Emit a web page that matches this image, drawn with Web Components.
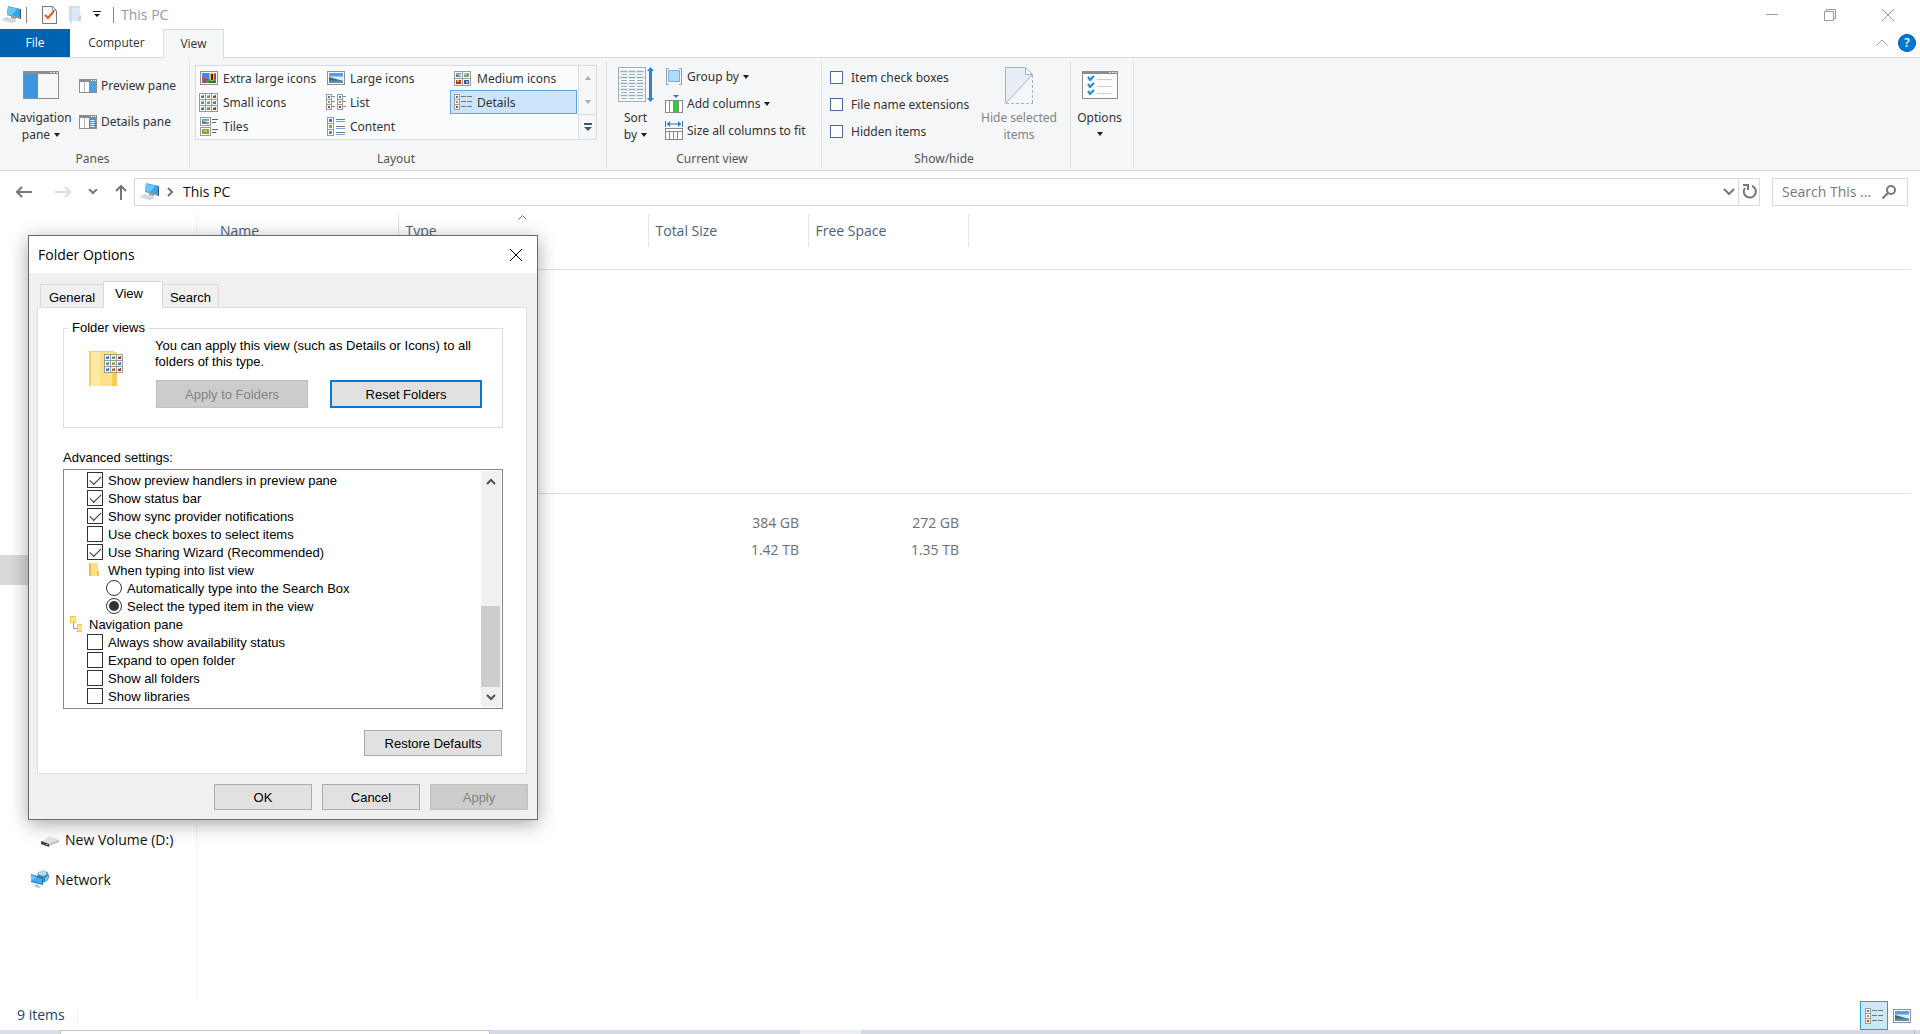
<!DOCTYPE html>
<html lang="en">
<head>
<meta charset="utf-8">
<title>This PC</title>
<style>
html, body {
    margin: 0;
    height: 100%;
    background: #fff;
    font-family: "Open Sans", "Noto Sans", sans-serif;
    overflow: hidden;
}
</style>
</head>
<body>
<explorer-window></explorer-window>

<script>
// thumbnails shared by the view icons
const pic = (x, y, w, h) => `
    <rect x="${x}" y="${y}" width="${w}" height="${h}" fill="#5b9be8"/>
    <path d="M${x} ${y + h * 0.35}H${x + w}V${y + h}H${x}z" fill="#dcebf7"/>
    <path d="M${x} ${y + h * 0.4}L${x + w} ${y + h * 0.8}H${x}z" fill="#3f6f5c"/>
    <rect x="${x}" y="${y + h * 0.75}" width="${w}" height="${h * 0.25}" fill="#5c8fb0"/>`;

const cell = (x, y, s, color) => `
    <rect x="${x + .5}" y="${y + .5}" width="${s - 1}" height="${s - 1}" fill="#fff" stroke="#9a9a9a"/>
    <rect x="${x + 2}" y="${y + 2}" width="${s - 4}" height="${s - 4}" fill="${color}"/>`;

const cells3 = () => {
    const colors = ["#3d7ab8", "#6f9d4a", "#a8372a", "#4f93a0", "#a39a35", "#3d7ab8", "#3d7ab8", "#b06a2c", "#a8372a"];
    return `<rect width="19" height="19" fill="#9a9a9a"/>` + colors.map((c, i) => {
        const x = 1 + (i % 3) * 6, y = 1 + Math.floor(i / 3) * 6;
        return `<rect x="${x}" y="${y}" width="5" height="5" fill="#fff"/>
            <rect x="${x + 1}" y="${y + 1}" width="3" height="3" fill="${c}"/>
            <rect x="${x + 1}" y="${y + 1}" width="2" height="1" fill="#a9cdf0"/>`;
    }).join("");
};

const listCells = (x) => cell(x, 0, 6, "#3d7ab8") + cell(x, 5, 6, "#a39a35") + cell(x, 10, 6, "#b03a20");

const pane = (inner) => `
    <rect x=".5" y=".5" width="17" height="13" fill="#fcfcfc" stroke="#8b8d90"/>
    <rect width="18" height="3" fill="#8b8d90"/>
    <path d="M12 1.500h1M14 1.500h1M16 1.500h1" stroke="#fff"/>
    <path d="M5.500 3v10" stroke="#b5b5b5"/>${inner}`;

// name: [width, height, markup]
const ICONS = {
    pc: [20, 17, `<path d="M7 0l13 3v10h-1L6 9z" fill="#8a9bab"/><path d="M18 3l2 0v10l-1 0z" fill="#44586b"/>
        <path d="M7 1l12 2-1 8-12-3z" fill="#2fa8f3"/><path d="M7 1l9 2-5 6-5-1z" fill="#6dc6fa"/>
        <path d="M10 10l5 1v2l-5-1z" fill="#8c99a5"/>
        <path d="M0 14l5-3 10 3v1l-4 2z" fill="#c0c8d1"/><path d="M0 14l5-3 9 3-4 2z" fill="#e1e6eb"/>
        <path d="M3 13l7 2M5 12l7 2" stroke="#c9d0d8"/>`],
    props: [15, 18, `<path d="M.5.5h10l4 4v13H.5z" fill="#fafafa" stroke="#777"/><path d="M10.500.5v4h4" fill="none" stroke="#999"/>
        <path d="M3 9l3 3 6-7" fill="none" stroke="#e8591c" stroke-width="2"/>`],
    newFolder: [14, 18, `<path d="M1 0h11v9h1v6h-9v3L1 15z" fill="#cfdcef"/><path d="M4 2h8v8h1v5H4z" fill="#dde7f4"/><path d="M11 9l2 1v5h-3z" fill="#c3d2e8"/>`],
    quickArrow: [8, 7, `<path d="M0 .5h8" stroke="#222"/><path d="M1 3h6L4 6z" fill="#111"/>`],
    minimize: [12, 12, `<path d="M0 5.500h12" stroke="#999"/>`],
    restore: [12, 12, `<path d="M.5 2.500h9v9h-9zM2.500 2.500v-2h9v9h-2" fill="none" stroke="#999"/>`],
    close: [12, 12, `<path d="M0 0L12 12M12 0L0 12" stroke="currentColor"/>`],
    collapse: [12, 7, `<path d="M.5 6.500L6 1l5.500 5.500" fill="none" stroke="#999"/>`],
    navPane: [36, 28, `<rect x=".5" y=".5" width="35" height="27" fill="#f8f8f8" stroke="#8b8d90"/><rect width="36" height="3" fill="#8b8d90"/>
        <path d="M27 1.500h2M30 1.500h2M33 1.500h2" stroke="#ddd"/><rect x="1" y="3" width="14" height="24" fill="#3d96df"/>`],
    previewPane: [18, 14, pane(`<rect x="10" y="3" width="7" height="10" fill="#4a9fe6"/>`)],
    detailsPane: [18, 14, pane(`<rect x="10" y="3" width="7" height="10" fill="#3d96df"/><path d="M11.500 5.500h4M11.500 7.500h4M11.500 9.500h4M11.500 11.500h4" stroke="#fff"/>`)],
    xl: [18, 14, `<rect x=".5" y=".5" width="17" height="13" fill="#fff" stroke="#8f8f8f"/><rect x="2" y="2" width="14" height="10" fill="#3f86e8"/>
        <path d="M2 6h3v6H2z" fill="#c64a5a"/><path d="M4 8h4v4H4z" fill="#7a4fa0"/><path d="M6 9h4v3H6z" fill="#4c9a3a"/>
        <path d="M9 2h6v5l-2 3h-2L9 7z" fill="#f0c000"/><path d="M11 3h2v6h-2z" fill="#29261f"/><path d="M9 10h7v2H9z" fill="#3c6e30"/><path d="M14 3h2v5h-2z" fill="#c33525"/>`],
    large: [18, 14, `<rect x=".5" y=".5" width="17" height="13" fill="#fff" stroke="#8f8f8f"/>${pic(2, 2, 14, 10)}`],
    medium: [17, 15, `<rect width="17" height="15" fill="#9a9a9a"/>
        <path d="M1 1h7v6H1zM9 1h7v6H9zM1 8h7v6H1zM9 8h7v6H9z" fill="#fff"/>
        ${pic(2, 2, 5, 4)}<rect x="10" y="2" width="5" height="4" fill="#7cab58"/><path d="M10 2h3v2h-3z" fill="#9cc9ee"/>
        <rect x="2" y="9" width="5" height="4" fill="#b8351f"/><path d="M3 9h2v2H3z" fill="#f0b429"/>
        <rect x="10" y="9" width="5" height="4" fill="#315fb2"/><path d="M12 10h2v2h-2z" fill="#f0c000"/>`],
    small: [19, 19, cells3()],
    list: [20, 16, `${listCells(0)}${listCells(11)}<path d="M6 2.500h3M6 7.500h3M6 12.500h3M17 2.500h3M17 7.500h3M17 12.500h3" stroke="#888"/>`],
    details: [18, 16, `${listCells(0)}<path d="M7 2.500h5M13 2.500h5M7 7.500h5M13 7.500h5M7 12.500h5M13 12.500h5" stroke="#777"/>`],
    tiles: [19, 19, `<rect x="1.500" y=".5" width="10" height="8" fill="#fff" stroke="#999"/>${pic(3, 2, 7, 5)}
        <rect x="1.500" y="10.500" width="10" height="8" fill="#fff" stroke="#999"/><rect x="3" y="12" width="7" height="5" fill="#7ca84f"/>
        <path d="M5 13h3v2H5z" fill="#e3b63b"/><path d="M13 2.500h6M13 5.500h4M13 12.500h6M13 15.500h4" stroke="#666"/>`],
    content: [19, 19, `${cell(1, 0, 7, "#3d7ab8")}${cell(1, 6, 7, "#a39a35")}${cell(1, 12, 7, "#4f93a0")}
        <path d="M10 2.500h9M10 9.500h9M10 15.500h9" stroke="#777"/><path d="M10 4.500h9M10 11.500h9M10 17.500h9" stroke="#6aa7ea"/>`],
    galUp: [6, 4, `<path d="M0 4L3 0l3 4z" fill="#a5adba"/>`],
    galDown: [6, 4, `<path d="M0 0h6L3 4z" fill="#a5adba"/>`],
    galMore: [8, 8, `<path d="M0 1h8" stroke="#42566e" stroke-width="2"/><path d="M0 4h8L4 8z" fill="#42566e"/>`],
    caret: [6, 4, `<path d="M0 0h6L3 4z" fill="#1e1e1e"/>`],
    sort: [36, 36, `<rect x=".5" y=".5" width="27" height="34" fill="#fdfdfd" stroke="#aaa"/>
        ${[3, 9, 15, 21, 27].map((y) => `<rect x="1" y="${y}" width="26" height="3" fill="#d4ebf6"/>`).join("")}
        ${[4, 7, 10, 13, 16, 19, 22, 25, 28, 31].map((y) => `<path d="M3 ${y + .5}h6M11 ${y + .5}h6M19 ${y + .5}h6" stroke="#aaa"/>`).join("")}
        <path d="M32.500 0l3.500 4h-2v27h2l-3.500 4-3.500-4h2V4h-2z" fill="#2a86d1"/>`],
    groupBy: [18, 17, `<path d="M4 .5H1.500v16H4M14 .5h2.500v16H14" fill="none" stroke="#999"/><rect x="3.500" y="2.500" width="11" height="11" fill="#b0dbfa" stroke="#76afe0"/>`],
    addColumns: [18, 18, `<path d="M8 0h6l-3 3z" fill="#2a78ba"/><rect x=".5" y="5.500" width="17" height="12" fill="#fff" stroke="#888"/>
        <path d="M4.500 6v11M8.500 6v11M13.500 6v11" stroke="#888"/><rect x="9" y="6" width="4" height="11" fill="#2fd22d"/>`],
    sizeColumns: [18, 19, `<path d="M.5 0v6M17.500 0v6M2 3h14" stroke="#2a78ba"/><path d="M2 3l3-3v6zM16 3l-3-3v6z" fill="#2a78ba"/>
        <rect x=".5" y="7.500" width="17" height="11" fill="#fff" stroke="#888"/><path d="M0 10.500h18M4.500 11v8M8.500 11v8M12.500 11v8" stroke="#888"/>`],
    hide: [29, 37, `<path d="M.5 36V.5h20l7 7z" fill="#e7eef8"/><path d="M.5 36V.5h20l7 7" fill="none" stroke="#a6b1c8"/>
        <path d="M20.500.5v7h7z" fill="#f8fafd" stroke="#a6b1c8"/><path d="M27 8L1 36" stroke="#a6b1c8"/>
        <path d="M27.500 8v28M1 36.500h27" stroke="#a6b1c8" stroke-dasharray="3 2"/>`],
    options: [36, 28, `<rect x=".5" y=".5" width="35" height="27" fill="#fcfcfc" stroke="#8b8d90"/><rect width="36" height="3" fill="#8b8d90"/>
        <path d="M27 1.500h2M30 1.500h2M33 1.500h2" stroke="#ddd"/>
        ${[5, 12, 19].map((y) => `<rect x="6" y="${y}" width="5" height="5" fill="#dceaf5"/><path d="M6 ${y + 1}l2 3 4-4" fill="none" stroke="#2a86d1" stroke-width="2"/>
        <path d="M15 ${y + 3.5}h15" stroke="#ccc"/>`).join("")}`],
    back: [16, 14, `<path d="M1 7h15M6 2L1 7l5 5" fill="none" stroke="#767676" stroke-width="2"/>`],
    forward: [16, 14, `<path d="M0 7h15M10 2l5 5-5 5" fill="none" stroke="#dcdcdc" stroke-width="2"/>`],
    recent: [10, 6, `<path d="M1 0l4 4 4-4" fill="none" stroke="#777" stroke-width="2"/>`],
    up: [12, 16, `<path d="M6 16V2M1 7l5-5 5 5" fill="none" stroke="#767676" stroke-width="2"/>`],
    crumb: [6, 10, `<path d="M1 1l4 4-4 4" fill="none" stroke="#777" stroke-width="2"/>`],
    drop: [12, 8, `<path d="M1 1l5 5 5-5" fill="none" stroke="#777" stroke-width="2"/>`],
    refresh: [15, 15, `<path d="M3 4A6 6 0 1 0 10 2" fill="none" stroke="#777" stroke-width="2"/><path d="M1 1h5v5" fill="none" stroke="#777" stroke-width="2"/>`],
    search: [14, 14, `<circle cx="9" cy="5" r="4" fill="none" stroke="#777" stroke-width="2"/><path d="M6 8L.5 13.500" stroke="#777" stroke-width="2"/>`],
    asc: [9, 5, `<path d="M.5 4.500l4-4 4 4" fill="none" stroke="#777"/>`],
    drive: [18, 10, `<path d="M0 5L9 0l9 3v2L8 9 0 7z" fill="#b9bcc1"/><path d="M1 4l8-4 9 3-10 4z" fill="#e2e4e7"/><path d="M0 4l8 3v3L0 7z" fill="#3d4246"/><path d="M5 7h2v1H5z" fill="#3be34a"/>`],
    network: [18, 18, `<circle cx="12" cy="6.500" r="6" fill="#3f8fba"/><path d="M9 1l5 0 2 3-3 2-4-1-2-1z" fill="#b4dcea"/><path d="M14 8l3-2v3l-3 3z" fill="#7fbfda"/>
        <path d="M0 4l12 4v7L0 12z" fill="#236f9f"/><path d="M0 5l11 4v5L0 11z" fill="#37aef7"/><path d="M0 5l6 2-6 4z" fill="#6ac5fb"/>
        <path d="M4 14l4 1v1l2 1-3 1-4-2z" fill="#b5c3cd"/>`],
    // dialog
    folderView: [34, 36, `<path d="M0 0h25v35H0z" fill="#f2cf62"/><path d="M2 1h26v34H2z" fill="#ffe08a"/><path d="M2 1h9v34H2z" fill="#ffe9a6"/>
        <path d="M23 24l2-3h3v14h-5z" fill="#f8cf55"/><g transform="translate(15 3)">${cells3()}</g>`],
    folder: [11, 14, `<path d="M0 0h9v11h1v2H0z" fill="#fbe08b"/><path d="M0 0l2 1v12l-2 0z" fill="#e8bd4c"/><path d="M8 8h2v5H8z" fill="#eec659"/>`],
    navTree: [13, 16, `<path d="M3.500 7v5.500H7" fill="none" stroke="#999"/><path d="M0 0h6v7H0z" fill="#f1c94e"/><path d="M1 1h5v4h1v1H1z" fill="#fbe08b"/>
        <path d="M7 8h5v8H7z" fill="#f1c94e"/><path d="M8 9h4v5h1v1H8z" fill="#fbe08b"/>`],
    scrollUp: [10, 7, `<path d="M1 6l4-4 4 4" fill="none" stroke="#505050" stroke-width="2"/>`],
    scrollDown: [10, 7, `<path d="M1 1l4 4 4-4" fill="none" stroke="#505050" stroke-width="2"/>`],
};

class Base extends HTMLElement {
    constructor() {
        super();
        this.attachShadow({mode: "open"});
    }

    connectedCallback() {
        this.shadowRoot.innerHTML = `<style>
        * { box-sizing: border-box; }
        button { font: inherit; color: inherit; background: none; border: 0; padding: 0; margin: 0; }
        </style>` + this.render();
    }
}

class WinIcon extends Base {
    render() {
        const [w, h, body] = ICONS[this.getAttribute("name")];
        return `
        <style>
        :host { display: inline-flex; flex: none; }
        svg { display: block; }
        </style>
        <svg width="${w}" height="${h}" viewBox="0 0 ${w} ${h}" aria-hidden="true">${body}</svg>`;
    }
}

class TitleBar extends Base {
    render() {
        return `
        <style>
        :host { display: flex; align-items: center; height: 29px; padding-left: 1px; color: #999; }
        .quick { display: flex; align-items: center; gap: 11px; padding: 0 12px 0 15px; margin-left: 5px; border: solid #888; border-width: 0 1px; height: 16px; }
        .title { font-size: 14px; margin-left: 7px; flex: 1; }
        .controls { display: flex; gap: 46px; margin-right: 26px; }
        button { display: flex; }
        </style>
        <win-icon name="pc"></win-icon>
        <div class="quick">
            <button aria-label="Properties"><win-icon name="props"></win-icon></button>
            <button aria-label="New folder"><win-icon name="newFolder"></win-icon></button>
            <button aria-label="Customize toolbar"><win-icon name="quickArrow"></win-icon></button>
        </div>
        <span class="title">This PC</span>
        <div class="controls">
            <button aria-label="Minimize"><win-icon name="minimize"></win-icon></button>
            <button aria-label="Restore"><win-icon name="restore"></win-icon></button>
            <button aria-label="Close"><win-icon name="close"></win-icon></button>
        </div>`;
    }
}

class RibbonTabs extends Base {
    render() {
        return `
        <style>
        :host { display: flex; height: 29px; font-size: 12px; color: #333; border-bottom: 1px solid #dadbdc; }
        button { height: 28px; padding-bottom: 1px; }
        .file { width: 70px; background: #0063b1; color: #fff; }
        .computer { width: 93px; }
        .view { width: 61px; height: 29px; background: #f5f6f7; border: 1px solid #dadbdc; border-bottom: 0; padding-bottom: 2px; }
        .right { display: flex; align-items: center; gap: 10px; margin-left: auto; padding-right: 4px; }
        .right button:first-child { display: flex; align-items: center; }
        .right .help { width: 18px; height: 18px; padding: 0; border-radius: 50%; background: #0078d7; border: 1px solid #005499; color: #fff; line-height: 16px; font-weight: 600; }
        </style>
        <button class="file">File</button>
        <button class="computer">Computer</button>
        <button class="view">View</button>
        <div class="right">
            <button aria-label="Collapse ribbon"><win-icon name="collapse"></win-icon></button>
            <button class="help">?</button>
        </div>`;
    }
}

class RibbonGroup extends Base {
    render() {
        return `
        <style>
        :host { display: flex; flex-direction: column; border-right: 1px solid #e2e3e4; height: 108px; }
        .body { display: flex; flex: 1; }
        .label { text-align: center; line-height: 16px; padding: 0 4px 2px 0; color: #555; }
        </style>
        <div class="body"><slot></slot></div>
        <div class="label">${this.getAttribute("label") || "&nbsp;"}</div>`;
    }
}

// tall button: icon over one or two lines of text
class RibbonBig extends Base {
    render() {
        const lines = this.getAttribute("lines").split("|");
        const caret = this.hasAttribute("caret") ? ` <win-icon name="caret"></win-icon>` : "";
        return `
        <style>
        :host { display: block; }
        :host([disabled]) button { color: #838383; }
        button { display: flex; flex-direction: column; align-items: center; width: 100%; color: #333; }
        .pic { height: 43px; display: flex; align-items: center; margin-bottom: 3px; padding-top: 1px; }
        .line { display: flex; align-items: center; gap: 4px; line-height: 17px; min-height: 15px; white-space: nowrap; }
        </style>
        <button ${this.hasAttribute("disabled") ? "disabled" : ""}>
            <span class="pic"><win-icon name="${this.getAttribute("icon")}"></win-icon></span>
            <span class="line">${lines[0]}</span>
            <span class="line">${lines[1] || ""}${caret}</span>
        </button>`;
    }
}

class RibbonItem extends Base {
    render() {
        const caret = this.hasAttribute("caret") ? `<win-icon name="caret"></win-icon>` : "";
        return `
        <style>
        :host { display: flex; height: 27px; }
        button { display: flex; align-items: center; gap: 4px; color: #333; white-space: nowrap; }
        :host([gallery]) { height: 24px; width: 127px; }
        :host([gallery]) button { width: 100%; gap: 5px; padding-left: 3px; }
        :host([selected]) button { background: #cce4fc; box-shadow: inset 0 0 0 1px #62a2e4; }
        .pic { display: flex; width: 19px; justify-content: center; }
        </style>
        <button><span class="pic"><win-icon name="${this.getAttribute("icon")}"></win-icon></span><slot></slot>${caret}</button>`;
    }
}

class RibbonCheck extends Base {
    render() {
        return `
        <style>
        :host { display: flex; align-items: center; height: 27px; }
        label { display: flex; align-items: center; gap: 8px; white-space: nowrap; }
        input { appearance: none; margin: 0; width: 13px; height: 13px; background: #fff; border: 1px solid #4a6a9c; }
        </style>
        <label><input type="checkbox">${this.getAttribute("label")}</label>`;
    }
}

class RibbonBar extends Base {
    render() {
        return `
        <style>
        :host { display: flex; height: 113px; padding-top: 3px; background: #f5f6f7; border-bottom: 1px solid #dadbdc; font: 12px "Noto Sans", "Open Sans", sans-serif; color: #333; }
        .stack { display: flex; flex-direction: column; }
        .panes ribbon-big { width: 78px; margin: 2px 0 0 2px; }
        .panes { width: 190px; }
        .panes .stack { gap: 9px; padding-top: 11px; margin-left: -2px; }
        .layout { width: 417px; }
        .gallery { display: flex; margin: 4px 0 0 5px; height: 75px; }
        .items { display: flex; flex-wrap: wrap; width: 384px; align-content: flex-start; background: #fbfcfe; border: 1px solid #dadbdc; }
        .scroll { display: flex; flex-direction: column; width: 18px; border: 1px solid #dadbdc; border-left: 0; }
        .scroll button { flex: 1; display: flex; align-items: center; justify-content: center; }
        .scroll button:last-child { border-top: 1px solid #dadbdc; }
        .current { width: 215px; }
        .current ribbon-big, .options ribbon-big { width: 57px; margin-top: 2px; }
        .current .stack { padding-top: 2px; }
        .show { width: 249px; }
        .show .stack { padding: 3px 0 0 8px; }
        .show ribbon-big { width: 98px; margin: 2px 2px 0 auto; }
        .options { width: 63px; }
        </style>
        <ribbon-group class="panes" label="Panes">
            <ribbon-big icon="navPane" lines="Navigation|pane" caret></ribbon-big>
            <div class="stack">
                <ribbon-item icon="previewPane">Preview pane</ribbon-item>
                <ribbon-item icon="detailsPane">Details pane</ribbon-item>
            </div>
        </ribbon-group>
        <ribbon-group class="layout" label="Layout">
            <div class="gallery">
                <div class="items">
                    <ribbon-item gallery icon="xl">Extra large icons</ribbon-item>
                    <ribbon-item gallery icon="large">Large icons</ribbon-item>
                    <ribbon-item gallery icon="medium">Medium icons</ribbon-item>
                    <ribbon-item gallery icon="small">Small icons</ribbon-item>
                    <ribbon-item gallery icon="list">List</ribbon-item>
                    <ribbon-item gallery selected icon="details">Details</ribbon-item>
                    <ribbon-item gallery icon="tiles">Tiles</ribbon-item>
                    <ribbon-item gallery icon="content">Content</ribbon-item>
                </div>
                <div class="scroll">
                    <button aria-label="Row up"><win-icon name="galUp"></win-icon></button>
                    <button aria-label="Row down"><win-icon name="galDown"></win-icon></button>
                    <button aria-label="More"><win-icon name="galMore"></win-icon></button>
                </div>
            </div>
        </ribbon-group>
        <ribbon-group class="current" label="Current view">
            <ribbon-big icon="sort" lines="Sort|by" caret></ribbon-big>
            <div class="stack">
                <ribbon-item icon="groupBy" caret>Group by</ribbon-item>
                <ribbon-item icon="addColumns" caret>Add columns</ribbon-item>
                <ribbon-item icon="sizeColumns">Size all columns to fit</ribbon-item>
            </div>
        </ribbon-group>
        <ribbon-group class="show" label="Show/hide">
            <div class="stack">
                <ribbon-check label="Item check boxes"></ribbon-check>
                <ribbon-check label="File name extensions"></ribbon-check>
                <ribbon-check label="Hidden items"></ribbon-check>
            </div>
            <ribbon-big disabled icon="hide" lines="Hide selected|items"></ribbon-big>
        </ribbon-group>
        <ribbon-group class="options">
            <ribbon-big icon="options" lines="Options" caret></ribbon-big>
        </ribbon-group>`;
    }
}

class AddressBar extends Base {
    render() {
        return `
        <style>
        :host { display: flex; align-items: center; height: 43px; padding: 0 12px 2px 16px; font-size: 14px; color: #111; box-sizing: border-box; }
        button { display: flex; align-items: center; }
        .nav { display: flex; align-items: center; width: 118px; gap: 17px; }
        .nav button:nth-child(2) { margin-left: 6px; }
        .path, .search { display: flex; align-items: center; height: 28px; border: 1px solid #d9d9d9; }
        .path { flex: 1; padding-left: 4px; gap: 8px; }
        .path a { color: inherit; text-decoration: none; margin-left: 2px; }
        .path .drop { margin-left: auto; }
        .path .refresh { width: 21px; height: 26px; justify-content: center; margin-left: -5px; border-left: 1px solid #d9d9d9; }
        .search { width: 136px; margin-left: 12px; padding: 0 11px 0 9px; }
        input { flex: 1; min-width: 0; border: 0; padding: 0; outline: 0; font: inherit; background: none; }
        input::placeholder { color: #777; opacity: 1; }
        </style>
        <div class="nav">
            <button aria-label="Back"><win-icon name="back"></win-icon></button>
            <button aria-label="Forward" disabled><win-icon name="forward"></win-icon></button>
            <button aria-label="Recent locations"><win-icon name="recent"></win-icon></button>
            <button aria-label="Up"><win-icon name="up"></win-icon></button>
        </div>
        <div class="path">
            <win-icon name="pc"></win-icon>
            <win-icon name="crumb"></win-icon>
            <a href="#">This PC</a>
            <button class="drop" aria-label="Previous locations"><win-icon name="drop"></win-icon></button>
            <button class="refresh" aria-label="Refresh"><win-icon name="refresh"></win-icon></button>
        </div>
        <div class="search">
            <input type="text" aria-label="Search This PC" placeholder="Search This ...">
            <win-icon name="search"></win-icon>
        </div>`;
    }
}

class NavTree extends Base {
    render() {
        return `
        <style>
        :host { display: block; width: 197px; border-right: 1px solid #f3f3f3; font-size: 14px; color: #111; }
        ul { list-style: none; margin: 0; padding: 0; }
        .current { height: 30px; background: #d9d9d9; margin: 341px 0 239px; }
        a { display: flex; align-items: center; height: 30px; gap: 6px; color: inherit; text-decoration: none; padding-left: 31px; }
        .child a { padding-left: 41px; margin-bottom: 10px; }
        .child win-icon { padding-top: 6px; }
        </style>
        <ul>
            <li class="current"></li>
            <li class="child"><a href="#"><win-icon name="drive"></win-icon>New Volume (D:)</a></li>
            <li><a href="#"><win-icon name="network"></win-icon>Network</a></li>
        </ul>`;
    }
}

class DriveTable extends Base {
    render() {
        return `
        <style>
        :host { display: block; flex: 1; padding-right: 9px; font-size: 14px; color: #6d6d6d; }
        table { width: 100%; border-collapse: collapse; table-layout: fixed; }
        th, td { padding: 0 9px 0 7px; }
        th { position: relative; height: 33px; text-align: left; font-weight: 400; color: #4c607a; border-right: 1px solid #e5e5e5; }
        th:first-child { padding-left: 23px; }
        th:last-child { border: 0; }
        .asc { position: absolute; top: 1px; left: calc(50% - 5px); }
        td { height: 27px; text-align: right; }
        .group td { border-bottom: 1px solid #dedede; height: 22px; }
        .group.second td { height: 224px; }
        .gap td { height: 16px; }
        .name { width: 201px; }
        .type { width: 250px; }
        .total { width: 160px; }
        .free { width: 160px; }
        </style>
        <table>
            <colgroup><col class="name"><col class="type"><col class="total"><col class="free"><col></colgroup>
            <thead>
                <tr>
                    <th>Name</th>
                    <th>Type<win-icon class="asc" name="asc"></win-icon></th>
                    <th>Total Size</th>
                    <th>Free Space</th>
                    <th></th>
                </tr>
            </thead>
            <tbody>
                <tr class="group"><td colspan="5"></td></tr>
                <tr class="group second"><td colspan="5"></td></tr>
                <tr class="gap"><td colspan="5"></td></tr>
                <tr><td></td><td></td><td>384 GB</td><td>272 GB</td><td></td></tr>
                <tr><td></td><td></td><td>1.42 TB</td><td>1.35 TB</td><td></td></tr>
            </tbody>
        </table>`;
    }
}

class StatusBar extends Base {
    render() {
        return `
        <style>
        :host { display: flex; align-items: center; height: 29px; padding: 0 9px 0 17px; font-size: 14px; color: #223f66; }
        .count { padding: 0 12px 2px 0; border-right: 1px solid #f3f3f3; flex: none; line-height: 14px; }
        .views { display: flex; margin-left: auto; gap: 5px; }
        button { display: flex; align-items: center; justify-content: center; height: 29px; }
        .on { width: 28px; background: #cce8f6; border: 1px solid #26a0da; }
        </style>
        <span class="count">9 items</span>
        <div class="views">
            <button class="on" aria-label="Details view"><win-icon name="details"></win-icon></button>
            <button aria-label="Large thumbnails"><win-icon name="large"></win-icon></button>
        </div>`;
    }
}

// top edge of the taskbar under the window
class TaskbarEdge extends Base {
    render() {
        return `
        <style>
        :host { display: flex; height: 4px; background: #d6d9e8; }
        .start { width: 60px; background: #d7dfea; }
        .box { width: 430px; background: #fff; border: 1px solid #c4c4c4; border-bottom: 0; }
        .app { width: 61px; margin-left: 310px; background: #eceef5; }
        .peek { width: 6px; margin-left: auto; border-left: 1px solid #b5b8c6; }
        </style>
        <div class="start"></div><div class="box"></div><div class="app"></div><div class="peek"></div>`;
    }
}

class WinButton extends Base {
    render() {
        return `
        <style>
        :host { display: block; width: 98px; height: 26px; }
        button { width: 100%; height: 100%; background: #e1e1e1; border: 1px solid #adadad; color: #000; }
        button:disabled { background: #ccc; border-color: #bfbfbf; color: #838383; }
        :host([focused]) button { border: 2px solid #0078d7; }
        </style>
        <button ${this.hasAttribute("disabled") ? "disabled" : ""}><slot></slot></button>`;
    }
}

// one row of the advanced settings tree: check, radio or folder
class SettingRow extends Base {
    render() {
        const kind = this.getAttribute("kind");
        const label = this.getAttribute("label");
        const on = this.hasAttribute("checked") ? "checked" : "";
        const row = kind == "folder" || kind == "navTree"
            ? `<div class="row ${kind}"><win-icon name="${kind}"></win-icon>${label}</div>`
            : `<label class="row ${kind}"><input type="${kind}" ${on}>${label}</label>`;
        return `
        <style>
        :host { display: block; }
        .row { display: flex; align-items: center; height: 18px; gap: 5px; padding-left: 22px; white-space: nowrap; }
        .radio { padding-left: 41px; }
        .folder { padding-left: 24px; gap: 8px; }
        .navTree { padding-left: 5px; gap: 6px; }
        input { appearance: none; width: 16px; height: 16px; margin: 0; border: 1px solid #333; background: #fff; display: grid; place-items: center; }
        input[type=radio] { border-radius: 50%; }
        input[type=checkbox]:checked::after { content: ""; width: 10px; height: 5px; border: solid #333; border-width: 0 0 1px 1px; transform: translateY(-1px) rotate(-45deg); }
        input[type=radio]:checked::after { content: ""; width: 10px; height: 10px; border-radius: 50%; background: #333; }
        </style>${row}`;
    }
}

class FolderOptions extends Base {
    render() {
        return `
        <style>
        :host {
            display: block;
            width: 510px;
            background: #f0f0f0;
            border: 1px solid #6b6b6b;
            box-shadow: 0 4px 18px rgba(0, 0, 0, .35);
            font: 13px "Liberation Sans", Arial, sans-serif;
            color: #000;
            box-sizing: border-box;
        }
        header { display: flex; align-items: center; justify-content: space-between; height: 37px; padding: 0 15px 0 9px; background: #fff; font: 14px "Open Sans", sans-serif; }
        header button { display: flex; }
        .tabs { display: flex; align-items: flex-end; padding: 8px 0 0 11px; }
        .tabs button { height: 23px; border: 1px solid #d9d9d9; border-bottom: 0; padding-top: 2px; }
        .tabs .general { width: 63px; border-right: 0; }
        .tabs .view { width: 60px; height: 27px; background: #fff; margin-bottom: -1px; padding: 0 8px 3px 0; }
        .tabs .search { width: 56px; border-left: 0; }
        .panel { margin: 0 10px 0 8px; padding: 12px 23px 17px 25px; background: #fff; border: 1px solid #dcdcdc; }
        fieldset { margin: 0; border: 1px solid #dcdcdc; padding: 0 20px 18px 25px; display: flex; gap: 32px; height: 108px; }
        legend { margin-left: -21px; padding: 0 4px; line-height: 16px; }
        fieldset win-icon { padding-top: 15px; }
        p { margin: 2px 0 10px; line-height: 16px; white-space: nowrap; }
        .pair { display: flex; gap: 22px; margin-left: 1px; }
        .pair win-button { width: 152px; height: 28px; }
        .caption { line-height: 16px; margin-top: 22px; margin-bottom: 3px; }
        .tree { display: flex; border: 1px solid #828790; height: 240px; padding: 1px; }
        .rows { flex: 1; }
        .bar { display: flex; flex-direction: column; width: 20px; background: #f0f0f0; }
        .bar button { height: 20px; display: flex; align-items: center; justify-content: center; }
        .thumb { height: 81px; margin-top: auto; margin-right: 1px; background: #cdcdcd; }
        .restore { width: 138px; margin: 21px 1px 0 auto; }
        footer { display: flex; justify-content: flex-end; gap: 10px; padding: 10px 9px 9px; }
        </style>
        <header>Folder Options<button aria-label="Close"><win-icon name="close"></win-icon></button></header>
        <div class="tabs">
            <button class="general">General</button>
            <button class="view">View</button>
            <button class="search">Search</button>
        </div>
        <div class="panel">
            <fieldset>
                <legend>Folder views</legend>
                <win-icon name="folderView"></win-icon>
                <div>
                    <p>You can apply this view (such as Details or Icons) to all<br>folders of this type.</p>
                    <div class="pair">
                        <win-button disabled>Apply to Folders</win-button>
                        <win-button focused>Reset Folders</win-button>
                    </div>
                </div>
            </fieldset>
            <div class="caption">Advanced settings:</div>
            <div class="tree">
                <div class="rows">
                    <setting-row kind="checkbox" checked label="Show preview handlers in preview pane"></setting-row>
                    <setting-row kind="checkbox" checked label="Show status bar"></setting-row>
                    <setting-row kind="checkbox" checked label="Show sync provider notifications"></setting-row>
                    <setting-row kind="checkbox" label="Use check boxes to select items"></setting-row>
                    <setting-row kind="checkbox" checked label="Use Sharing Wizard (Recommended)"></setting-row>
                    <setting-row kind="folder" label="When typing into list view"></setting-row>
                    <setting-row kind="radio" label="Automatically type into the Search Box"></setting-row>
                    <setting-row kind="radio" checked label="Select the typed item in the view"></setting-row>
                    <setting-row kind="navTree" label="Navigation pane"></setting-row>
                    <setting-row kind="checkbox" label="Always show availability status"></setting-row>
                    <setting-row kind="checkbox" label="Expand to open folder"></setting-row>
                    <setting-row kind="checkbox" label="Show all folders"></setting-row>
                    <setting-row kind="checkbox" label="Show libraries"></setting-row>
                </div>
                <div class="bar">
                    <button aria-label="Scroll up"><win-icon name="scrollUp"></win-icon></button>
                    <div class="thumb"></div>
                    <button aria-label="Scroll down"><win-icon name="scrollDown"></win-icon></button>
                </div>
            </div>
            <win-button class="restore">Restore Defaults</win-button>
        </div>
        <footer>
            <win-button>OK</win-button>
            <win-button>Cancel</win-button>
            <win-button disabled>Apply</win-button>
        </footer>`;
    }
}

class ExplorerWindow extends Base {
    render() {
        return `
        <style>
        :host { display: flex; flex-direction: column; min-height: 100vh; position: relative; }
        main { display: flex; flex: 1; }
        folder-options { position: absolute; left: 28px; top: 235px; }
        </style>
        <title-bar></title-bar>
        <ribbon-tabs></ribbon-tabs>
        <ribbon-bar></ribbon-bar>
        <address-bar></address-bar>
        <main>
            <nav-tree></nav-tree>
            <drive-table></drive-table>
        </main>
        <status-bar></status-bar>
        <taskbar-edge></taskbar-edge>
        <folder-options role="dialog" aria-label="Folder Options"></folder-options>`;
    }
}

customElements.define("win-icon", WinIcon);
customElements.define("title-bar", TitleBar);
customElements.define("ribbon-tabs", RibbonTabs);
customElements.define("ribbon-group", RibbonGroup);
customElements.define("ribbon-big", RibbonBig);
customElements.define("ribbon-item", RibbonItem);
customElements.define("ribbon-check", RibbonCheck);
customElements.define("ribbon-bar", RibbonBar);
customElements.define("address-bar", AddressBar);
customElements.define("nav-tree", NavTree);
customElements.define("drive-table", DriveTable);
customElements.define("status-bar", StatusBar);
customElements.define("taskbar-edge", TaskbarEdge);
customElements.define("win-button", WinButton);
customElements.define("setting-row", SettingRow);
customElements.define("folder-options", FolderOptions);
customElements.define("explorer-window", ExplorerWindow);
</script>
</body>
</html>
